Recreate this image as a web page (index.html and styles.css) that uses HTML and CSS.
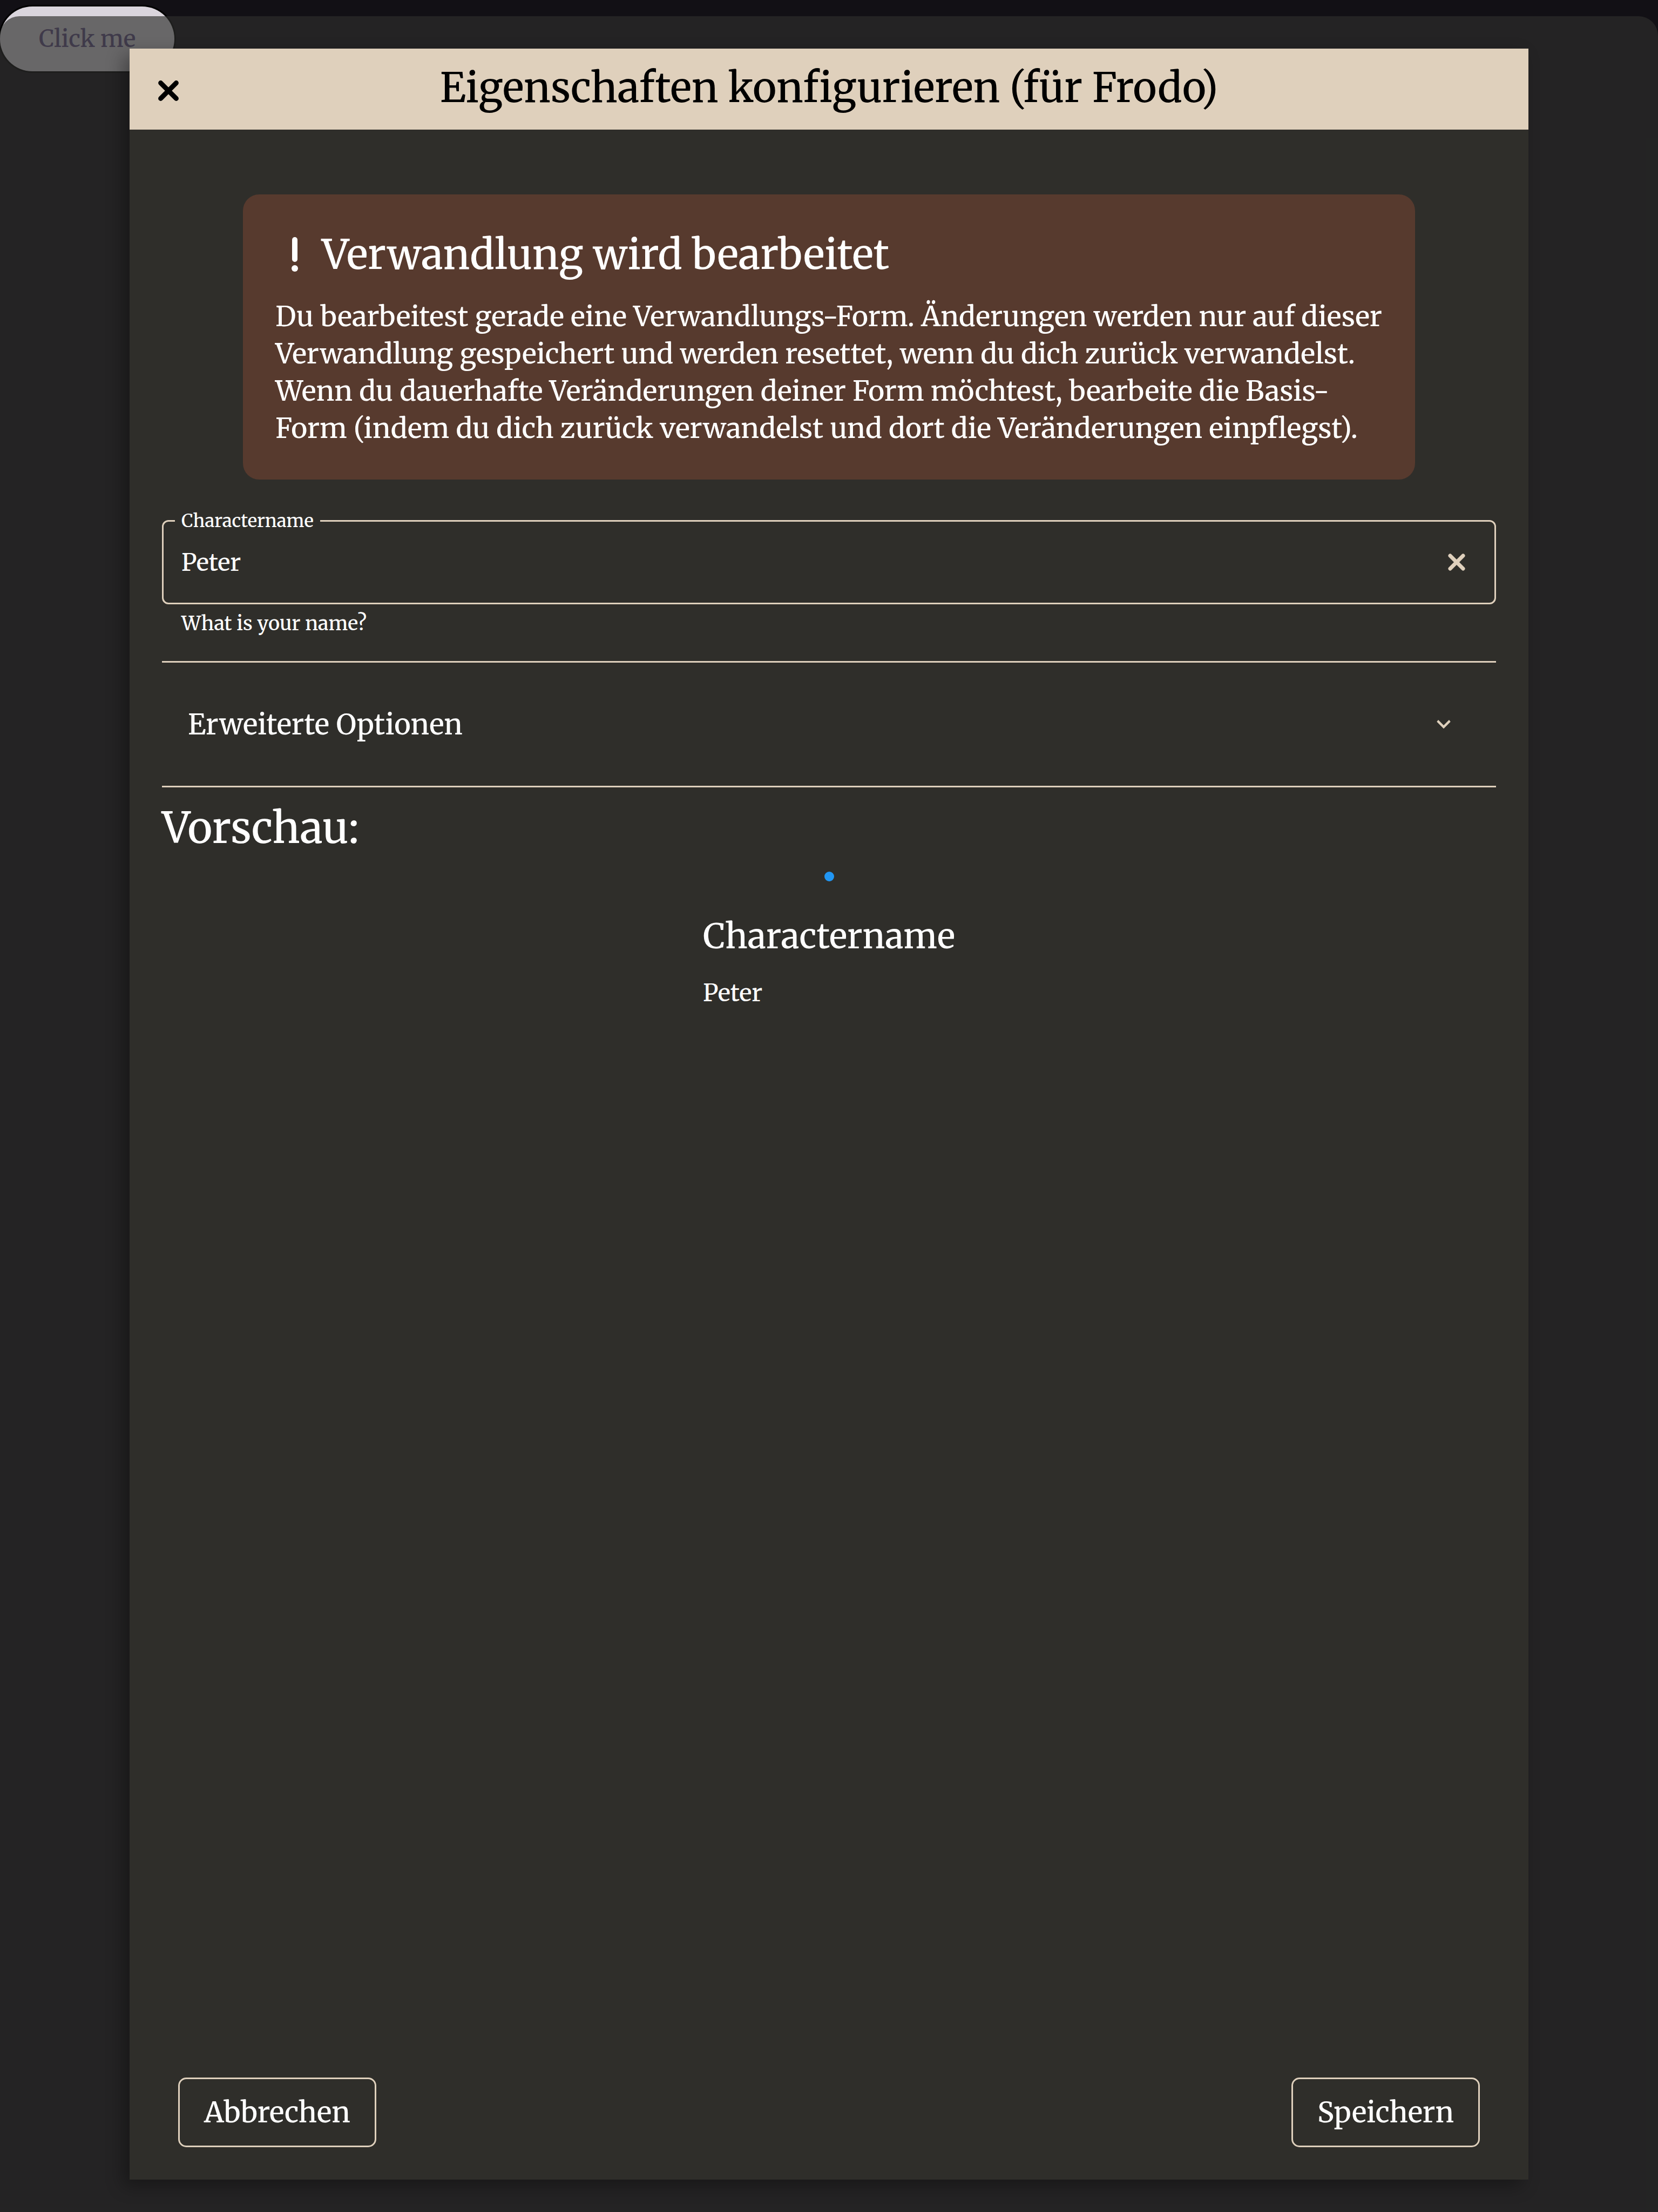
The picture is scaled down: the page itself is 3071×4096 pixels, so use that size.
FILE: index.html
```html
<!DOCTYPE html>
<html lang="de">
<head>
<meta charset="utf-8">
<title>Eigenschaften konfigurieren</title>
<link rel="stylesheet" href="styles.css">
</head>
<body>
<button class="trigger" type="button">Click me</button>

<div class="sheet">
  <section class="dialog" role="dialog" aria-labelledby="dialog-title">
    <header class="dialog-header">
      <button class="icon-button close" type="button" aria-label="Schließen">
        <svg width="38" height="38" viewBox="0 0 38 38" fill="none" stroke="currentColor" stroke-width="9" stroke-linecap="round"><path d="M4.6 4.6l28.8 28.8M33.4 4.6L4.6 33.4"/></svg>
      </button>
      <h1 class="dialog-title" id="dialog-title">Eigenschaften konfigurieren (für Frodo)</h1>
    </header>

    <div class="dialog-content">
      <aside class="notice">
        <h2 class="notice-title">
          <svg width="72" height="72" viewBox="0 0 72 72" fill="currentColor"><rect x="31" y="4" width="10" height="46" rx="5"/><circle cx="36" cy="62" r="6"/></svg>
          Verwandlung wird bearbeitet
        </h2>
        <p class="notice-text">Du bearbeitest gerade eine Verwandlungs-Form. Änderungen werden nur auf dieser Verwandlung gespeichert und werden resettet, wenn du dich zurück verwandelst. Wenn du dauerhafte Veränderungen deiner Form möchtest, bearbeite die Basis-Form (indem du dich zurück verwandelst und dort die Veränderungen einpflegst).</p>
      </aside>

      <div class="field">
        <label class="field-label" for="name">Charactername</label>
        <input class="field-input" id="name" type="text" value="Peter" aria-describedby="name-help">
        <button class="icon-button clear" type="button" aria-label="Leeren">
          <svg width="32" height="32" viewBox="0 0 32 32" fill="none" stroke="currentColor" stroke-width="7" stroke-linecap="round"><path d="M4 4l24 24M28 4L4 28"/></svg>
        </button>
      </div>
      <p class="field-help" id="name-help">What is your name?</p>

      <button class="expander" type="button" aria-expanded="false">
        Erweiterte Optionen
        <svg width="50" height="50" viewBox="0 0 24 24" fill="currentColor"><path d="M16.8 8.2L12 13 7.2 8.2 5.9 9.8l6.1 6.2 6.1-6.2z"/></svg>
      </button>

      <h2 class="preview-title">Vorschau:</h2>
      <div class="preview">
        <span class="preview-dot"></span>
        <dl class="preview-list">
          <dt>Charactername</dt>
          <dd>Peter</dd>
        </dl>
      </div>
    </div>

    <footer class="dialog-footer">
      <button class="action" type="button">Abbrechen</button>
      <button class="action" type="button">Speichern</button>
    </footer>
  </section>
</div>
</body>
</html>
```
FILE: styles.css
```css
:root {
  --accent: #dfd0bc;
  --surface: #2f2e2a;
  --text: #fff;
}

* {
  box-sizing: border-box;
}

body,
h1,
h2,
p,
dl,
dd {
  margin: 0;
}

body {
  min-height: 100vh;
  padding-top: 12px;
  background: #121015;
  color: var(--text);
  font-family: Merriweather, "Noto Serif", "DejaVu Serif Condensed", "Liberation Serif", serif;
  font-size: 51px;
  font-weight: 500;
}

h1,
h2 {
  font-weight: 500;
}

button,
input {
  padding: 0;
  border: 0;
  background: none;
  color: inherit;
  font: inherit;
}

svg {
  display: block;
  flex: none;
}

.trigger {
  display: block;
  height: 120px;
  padding: 0 72px;
  border-radius: 60px;
  background: #dad5dd;
  box-shadow: 0 0 0 3px #000;
  color: #615284;
  font-size: 43px;
}

/* Translucent sheet that covers the page below its top edge */
.sheet {
  position: absolute;
  inset: 30px 0 0;
  display: flex;
  padding: 60px 240px;
  border-radius: 36px 36px 0 0;
  background: rgba(45, 46, 44, 0.66);
}

.dialog {
  flex: 1;
  display: flex;
  flex-direction: column;
  background: var(--surface);
  box-shadow: -12px 12px 30px rgba(0, 0, 0, 0.33);
}

.dialog-header {
  display: grid;
  grid-template-columns: 144px 1fr 144px;
  height: 150px;
  background: var(--accent);
  color: #000;
}

.dialog-title {
  font-size: 75px;
  line-height: 144px;
  text-align: center;
}

.icon-button {
  display: flex;
  align-items: center;
  justify-content: center;
}

.close {
  padding-top: 6px;
}

.dialog-content {
  flex: 1;
  padding: 120px 60px 0;
}

.notice {
  margin: 0 150px 75px;
  padding: 60px 48px 60px 60px;
  border-radius: 30px;
  background: #573a2e;
}

.notice-title {
  display: flex;
  align-items: center;
  gap: 14px;
  margin-bottom: 30px;
  font-size: 75px;
  line-height: 102px;
}

.notice-text {
  line-height: 69px;
}

.field {
  position: relative;
  display: flex;
  height: 156px;
  border: 3px solid var(--accent);
  border-radius: 12px;
}

.field-label {
  position: absolute;
  top: -24px;
  left: 21px;
  padding: 0 12px;
  background: var(--surface);
  font-size: 33px;
  line-height: 45px;
}

.field-input {
  flex: 1;
  min-width: 0;
  padding: 0 33px;
  font-size: 44px;
}

.clear {
  width: 141px;
  color: var(--accent);
}

.field-help {
  padding: 12px 36px 45px;
  font-size: 36px;
  line-height: 48px;
}

.expander {
  display: flex;
  align-items: center;
  justify-content: space-between;
  width: 100%;
  height: 234px;
  padding: 0 72px 0 48px;
  border: solid var(--accent);
  border-width: 3px 0;
  font-size: 52px;
}

.expander svg {
  color: var(--accent);
}

.preview-title {
  margin-top: 24px;
  font-size: 78px;
  line-height: 102px;
}

.preview {
  display: flex;
  flex-direction: column;
  align-items: center;
  gap: 60px;
  padding-top: 30px;
}

.preview-dot {
  width: 18px;
  height: 18px;
  border-radius: 50%;
  background: #2196f3;
}

.preview-list {
  display: grid;
  gap: 33px;
}

.preview-list dt {
  font-size: 63px;
  line-height: 84px;
}

.preview-list dd {
  font-size: 44px;
  line-height: 60px;
}

.dialog-footer {
  display: flex;
  justify-content: space-between;
  padding: 0 90px 60px;
}

.action {
  height: 129px;
  padding: 0 45px;
  border: 3px solid var(--accent);
  border-radius: 15px;
  font-size: 52px;
}
```
